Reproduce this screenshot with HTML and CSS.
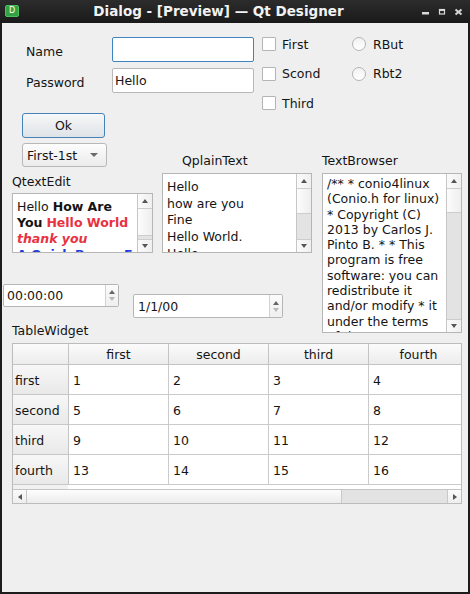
FILE: index.html
```html
<!DOCTYPE html>
<html>
<head>
<meta charset="utf-8">
<title>Dialog - [Preview] — Qt Designer</title>
<link rel="stylesheet" href="styles.css">
</head>
<body>
<div class="window">
  <div class="titlebar">
    <div class="app-icon">D</div>
    <div class="title">Dialog - [Preview] — Qt Designer</div>
    <svg class="wm" width="48" height="23" viewBox="0 0 48 23">
      <rect x="4" y="12" width="7" height="2.5" fill="#d8d8d8"/>
      <rect x="21.5" y="9.5" width="5" height="4.5" fill="none" stroke="#d8d8d8" stroke-width="1.2"/>
      <rect x="21" y="9" width="6" height="2" fill="#d8d8d8"/>
      <path d="M37.5 9.5 L43.5 14.5 M43.5 9.5 L37.5 14.5" stroke="#d8d8d8" stroke-width="2"/>
    </svg>
  </div>
  <div class="dialog">
    <div class="band-top">
      <div class="form-col">
        <div class="form-grid">
          <span class="form-label">Name</span>
          <div class="line-edit focused"></div>
          <span class="form-label">Password</span>
          <div class="line-edit">Hello</div>
        </div>
        <div class="push-button">Ok</div>
      </div>
      <div class="check-col">
        <div class="check-item"><span class="check-box"></span><span>First</span></div>
        <div class="check-item"><span class="check-box"></span><span>Scond</span></div>
        <div class="check-item"><span class="check-box"></span><span>Third</span></div>
      </div>
      <div class="radio-col">
        <div class="check-item"><span class="radio"></span><span>RBut</span></div>
        <div class="check-item"><span class="radio"></span><span>Rbt2</span></div>
      </div>
    </div>

    <div class="band-mid">
      <div class="left-stack">
        <div class="edit-row">
          <div class="col-textedit">
            <div class="combo"><span>First-1st</span><span class="combo-arrow"></span></div>
            <div class="caption">QtextEdit</div>
            <div class="text-box textedit">
              <div class="text-content rich">
                Hello <b>How Are</b><br>
                <b>You</b> <b class="red">Hello World</b><br>
                <b class="red"><i>thank you</i></b><br>
                <b class="blue">A Quick Brown Fox</b>
              </div>
              <div class="vscroll">
                <div class="sb-btn up"><span class="arr-up"></span></div>
                <div class="sb-handle h-textedit"></div>
                <div class="sb-track"></div>
                <div class="sb-btn down"><span class="arr-down"></span></div>
              </div>
            </div>
          </div>
          <div class="col-plain">
            <div class="caption indent">QplainText</div>
            <div class="text-box plain">
              <div class="text-content plain-text">Hello<br>how are you<br>Fine<br>Hello World.<br>Hello</div>
              <div class="vscroll">
                <div class="sb-btn up"><span class="arr-up"></span></div>
                <div class="sb-handle h-plain"></div>
                <div class="sb-track"></div>
                <div class="sb-btn down"><span class="arr-down"></span></div>
              </div>
            </div>
          </div>
        </div>
        <div class="spin-row">
          <div class="spin time">
            <span class="spin-text">00:00:00</span>
            <div class="spin-btns"><span class="arr-up small"></span><span class="arr-down small dim"></span></div>
          </div>
          <div class="spin date">
            <span class="spin-text">1/1/00</span>
            <div class="spin-btns"><span class="arr-up small"></span><span class="arr-down small dim"></span></div>
          </div>
        </div>
        <div class="caption table-caption">TableWidget</div>
      </div>
      <div class="col-browser">
        <div class="caption">TextBrowser</div>
        <div class="text-box browser">
          <div class="text-content browser-text">/** * conio4linux<br>(Conio.h for linux)<br>* Copyright (C)<br>2013 by Carlos J.<br>Pinto B. * * This<br>program is free<br>software: you can<br>redistribute it<br>and/or modify * it<br>under the terms<br>of the GNU</div>
          <div class="vscroll">
            <div class="sb-btn up"><span class="arr-up"></span></div>
            <div class="sb-handle h-browser"></div>
            <div class="sb-track"></div>
            <div class="sb-btn down"><span class="arr-down"></span></div>
          </div>
        </div>
      </div>
    </div>

    <div class="table">
      <div class="table-grid">
        <div class="hh corner"></div>
        <div class="hh">first</div>
        <div class="hh">second</div>
        <div class="hh">third</div>
        <div class="hh">fourth</div>

        <div class="vh">first</div>
        <div class="cell">1</div><div class="cell">2</div><div class="cell">3</div><div class="cell">4</div>
        <div class="vh">second</div>
        <div class="cell">5</div><div class="cell">6</div><div class="cell">7</div><div class="cell">8</div>
        <div class="vh">third</div>
        <div class="cell">9</div><div class="cell">10</div><div class="cell">11</div><div class="cell">12</div>
        <div class="vh">fourth</div>
        <div class="cell">13</div><div class="cell">14</div><div class="cell">15</div><div class="cell">16</div>
      </div>
      <div class="table-strip"><span class="strip-vh"></span></div>
      <div class="hscroll">
        <div class="hsb-btn"><span class="arr-left"></span></div>
        <div class="hsb-handle"></div>
        <div class="hsb-track"></div>
        <div class="hsb-btn right"><span class="arr-right"></span></div>
      </div>
    </div>
  </div>
</div>
</body>
</html>
```

FILE: styles.css
```css
* { box-sizing: border-box; }
html, body { margin: 0; padding: 0; }
body {
  width: 470px;
  height: 594px;
  overflow: hidden;
  background: #1c1c1c;
  font-family: "DejaVu Sans", "Liberation Sans", sans-serif;
  font-size: 12.5px;
  color: #141414;
}
.window {
  width: 470px;
  height: 594px;
  display: flex;
  flex-direction: column;
  padding: 0 2px 2px;
  background: #1c1c1c;
}

/* Title bar */
.titlebar {
  height: 23px;
  flex: none;
  margin: 0 -2px;
  padding: 0 4px 0 5px;
  display: flex;
  align-items: center;
  background: linear-gradient(#2c2c2c, #1a1a1a);
}
.app-icon {
  width: 14px;
  height: 12px;
  margin-top: -1px;
  border-radius: 2px;
  background: #33a244;
  border: 1px solid #4cc05c;
  color: #fff;
  font-size: 8px;
  line-height: 10px;
  text-align: center;
}
.title {
  flex: 1;
  text-align: center;
  color: #f2f2f2;
  font-weight: bold;
  font-size: 13.5px;
  margin-top: -2px;
}
.wm { flex: none; display: block; }

/* Dialog body */
.dialog {
  flex: 1;
  background: #efefef;
}

/* Top band */
.band-top {
  display: flex;
  align-items: flex-start;
  padding-top: 14px;
}
.form-col {
  margin-left: 20px;
  width: 232px;
}
.form-grid {
  display: grid;
  grid-template-columns: 90px 142px;
  grid-auto-rows: 25px;
  row-gap: 6px;
}
.form-label {
  align-self: center;
  padding-left: 4px;
  padding-top: 3px;
}
.line-edit {
  border: 1px solid #b8b8b8;
  border-radius: 2px;
  background: #fff;
  padding-left: 2px;
  display: flex;
  align-items: center;
}
.line-edit.focused {
  border-color: #3d84c0;
}
.push-button {
  margin-top: 20px;
  width: 83px;
  height: 25px;
  border: 1px solid #4582b8;
  border-radius: 3px;
  background: linear-gradient(#f6f7f8, #dfe3e7);
  display: flex;
  align-items: center;
  justify-content: center;
}
.check-col {
  margin-left: 8px;
  width: 90px;
  display: flex;
  flex-direction: column;
  gap: 15.5px;
}
.radio-col {
  display: flex;
  flex-direction: column;
  gap: 15.5px;
}
.check-item {
  height: 14px;
  display: flex;
  align-items: center;
  gap: 6px;
  white-space: nowrap;
}
.check-box {
  width: 14px;
  height: 14px;
  border: 1px solid #b4b4b4;
  border-radius: 1px;
  background: #fff;
}
.radio {
  width: 14px;
  height: 14px;
  border: 1px solid #b4b4b4;
  border-radius: 50%;
  background: linear-gradient(#f2f2f2, #fff);
  margin-right: 1px;
}

/* Middle band */
.band-mid {
  display: flex;
  align-items: flex-start;
  margin-top: 5px;
}
.left-stack {
  width: 310px;
}
.edit-row {
  display: flex;
  align-items: flex-start;
  padding-left: 10px;
}
.col-textedit { width: 141px; }
.combo {
  margin-left: 10px;
  width: 85px;
  height: 24px;
  border: 1px solid #b8b8b8;
  border-radius: 3px;
  background: linear-gradient(#fdfdfd, #ebebeb);
  display: flex;
  align-items: center;
  justify-content: space-between;
  padding: 0 8px 0 4px;
}
.combo-arrow {
  width: 0;
  height: 0;
  border-left: 4px solid transparent;
  border-right: 4px solid transparent;
  border-top: 4px solid #6a6a6a;
}
.caption {
  line-height: 16px;
  height: 16px;
  white-space: nowrap;
}
.col-textedit .caption { margin-top: 7px; }
.col-plain {
  margin-left: 9px;
  width: 150px;
}
.col-plain .caption { margin-top: 10px; }
.caption.indent { padding-left: 20px; }

.text-box {
  display: flex;
  border: 1px solid #b6b6b6;
  background: #fff;
  overflow: hidden;
}
.textedit { margin-top: 3px; height: 60px; }
.plain { margin-top: 4px; height: 80px; }
.browser { margin-top: 4px; height: 160px; }
.text-content {
  flex: 1;
  min-width: 0;
  overflow: hidden;
  white-space: nowrap;
  padding: 5px 0 0 4px;
  line-height: 16px;
}
.plain-text { line-height: 16.7px; padding-top: 5px; }
.browser-text { padding-top: 2px; line-height: 15.3px; }
.rich b { font-weight: bold; }
.red { color: #e8323f; }
.blue { color: #1c3de0; }

.vscroll {
  width: 15px;
  flex: none;
  display: flex;
  flex-direction: column;
  border-left: 1px solid #c6c6c6;
  background: #e3e3e3;
}
.sb-btn {
  height: 15px;
  flex: none;
  display: flex;
  align-items: center;
  justify-content: center;
  background: linear-gradient(90deg, #fbfbfb, #efefef);
}
.sb-btn.up { border-bottom: 1px solid #cdcdcd; }
.sb-btn.down { border-top: 1px solid #cdcdcd; height: 13px; }
.sb-handle {
  flex: none;
  background: linear-gradient(90deg, #fcfcfc, #eeeeee);
  border-bottom: 1px solid #cdcdcd;
}
.h-textedit { height: 27px; }
.h-plain { height: 25px; }
.h-browser { height: 24px; }
.sb-track { flex: 1; background: #e3e3e3; }

.arr-up, .arr-down {
  width: 0;
  height: 0;
  border-left: 3.5px solid transparent;
  border-right: 3.5px solid transparent;
}
.arr-up { border-bottom: 4px solid #555; }
.arr-down { border-top: 4px solid #555; }
.arr-up.small { border-left-width: 3px; border-right-width: 3px; border-bottom-width: 4px; border-bottom-color: #666; }
.arr-down.small { border-left-width: 3px; border-right-width: 3px; border-top-width: 4px; }
.arr-down.dim { border-top-color: #b9b9b9; }

.col-browser {
  margin-left: 10px;
  width: 140px;
}
.col-browser .caption { margin-top: 10px; }

/* Spin boxes */
.spin-row {
  display: flex;
  align-items: flex-start;
  margin-top: 31px;
}
.spin {
  display: flex;
  border: 1px solid #b6b6b6;
  border-radius: 2px;
  background: #fff;
}
.spin.time {
  margin-left: 1px;
  width: 116px;
  height: 23px;
}
.spin.date {
  margin-left: 14px;
  margin-top: 10px;
  width: 150px;
  height: 24px;
}
.spin-text {
  flex: 1;
  display: flex;
  align-items: center;
  padding-left: 3px;
}
.spin.date .spin-text { padding-left: 4px; }
.spin-btns {
  width: 13px;
  flex: none;
  border-left: 1px solid #d2d2d2;
  display: flex;
  flex-direction: column;
  align-items: center;
  justify-content: center;
  gap: 3px;
  background: linear-gradient(#fbfbfb, #efefef);
}
.table-caption {
  margin-top: 5px;
  padding-left: 10px;
}

/* Table */
.table {
  margin-top: 4px;
  margin-left: 10px;
  width: 450px;
  height: 161px;
  border: 1px solid #bcbcbc;
  background: #fff;
  display: flex;
  flex-direction: column;
  overflow: hidden;
}
.table-grid {
  display: grid;
  grid-template-columns: 56px 100px 100px 100px 100px;
  grid-template-rows: 21px repeat(4, 30px);
  width: 448px;
  overflow: hidden;
}
.hh {
  border-right: 1px solid #c4c4c4;
  border-bottom: 1px solid #c4c4c4;
  background: linear-gradient(#fbfbfb, #ececec);
  text-align: center;
  line-height: 20px;
  padding-top: 1px;
  white-space: nowrap;
  overflow: visible;
}
.hh:last-child { border-right: 0; }
.vh {
  border-right: 1px solid #c4c4c4;
  border-bottom: 1px solid #c8c8c8;
  background: linear-gradient(#f7f7f7, #e9e9e9);
  display: flex;
  align-items: center;
  padding: 2px 0 0 2px;
}
.cell {
  border-right: 1px solid #cbcbcb;
  border-bottom: 1px solid #cbcbcb;
  display: flex;
  align-items: center;
  padding: 1px 0 0 4px;
}
.table-strip {
  height: 4px;
  flex: none;
  display: flex;
}
.strip-vh {
  width: 55px;
  background: #f1f1f1;
}
.hscroll {
  height: 14px;
  flex: none;
  display: flex;
  border-top: 1px solid #c4c4c4;
  background: #e3e3e3;
}
.hsb-btn {
  width: 14px;
  flex: none;
  display: flex;
  align-items: center;
  justify-content: center;
  background: linear-gradient(#fbfbfb, #eeeeee);
  border-right: 1px solid #c9c9c9;
}
.hsb-btn.right {
  border-right: 0;
  border-left: 1px solid #c9c9c9;
  width: 14px;
}
.hsb-handle {
  width: 315px;
  flex: none;
  background: linear-gradient(#fdfdfd, #ececec);
  border-right: 1px solid #c9c9c9;
}
.hsb-track { flex: 1; background: #e3e3e3; }
.arr-left, .arr-right {
  width: 0;
  height: 0;
  border-top: 3.5px solid transparent;
  border-bottom: 3.5px solid transparent;
}
.arr-left { border-right: 4px solid #555; }
.arr-right { border-left: 4px solid #555; }
```
